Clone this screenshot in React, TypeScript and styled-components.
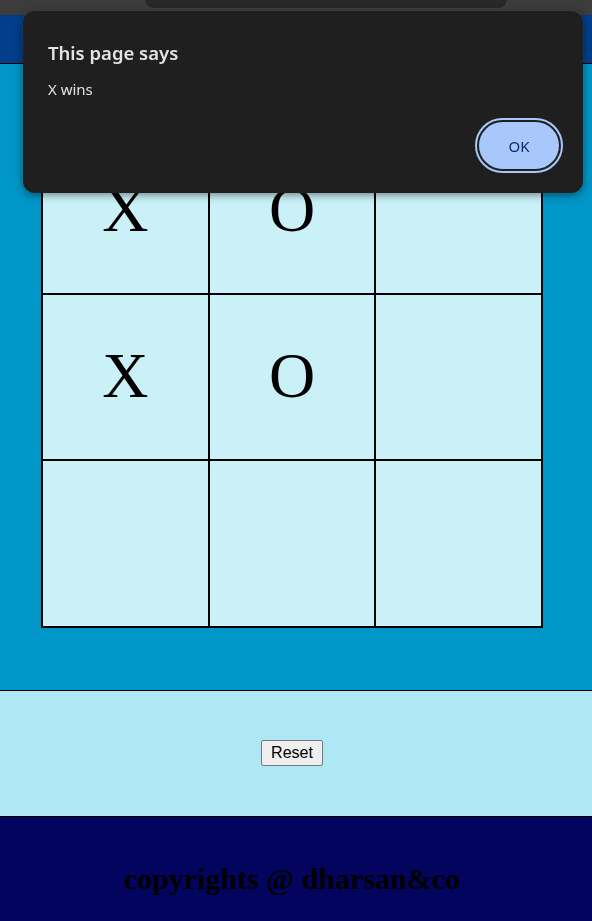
import React from "react";
import styled, { createGlobalStyle } from "styled-components";

const Global = createGlobalStyle`
  html, body { margin: 0; padding: 0; }
  body { font-family: "Liberation Serif", "Times New Roman", serif; background: #03045e; }
`;

const Header = styled.header`
  height: 63px;
  background: #023e8a;
  border-bottom: 1px solid #000;
`;

const Main = styled.main`
  background: #0096c7;
  padding: 62px 8px 62px 0;
  display: flex;
  justify-content: center;
`;

const Board = styled.div`
  width: 500px;
  border: 1px solid #000;
  display: grid;
  grid-template-columns: repeat(3, 1fr);
  grid-template-rows: repeat(3, 166.67px);
`;

const Cell = styled.div`
  border: 1px solid #000;
  background: #caf0f8;
  display: flex;
  align-items: center;
  justify-content: center;
  padding-bottom: 1px;
  box-sizing: border-box;
  font-family: "Liberation Serif", "Times New Roman", serif;
  font-size: 64px;
  color: #000;
`;

const Controls = styled.section`
  background: #ade8f4;
  border-top: 1px solid #000;
  height: 125px;
  padding-right: 8px;
  display: flex;
  align-items: center;
  justify-content: center;
`;

const ResetButton = styled.button`
  font-family: "Liberation Sans", Arial, sans-serif;
  font-size: 16px;
  color: #000;
  background: #efefef;
  border: 1px solid #767676;
  border-radius: 2px;
  padding: 3px 9px;
  line-height: 18px;
`;

const Footer = styled.footer`
  background: #03045e;
  border-top: 1px solid #000;
  padding: 24px 8px 40px 0;
  text-align: center;
`;

const FooterTitle = styled.h1`
  margin: 21.44px 0;
  font-size: 30px;
  font-weight: bold;
  color: #000;
  font-family: "Liberation Serif", "Times New Roman", serif;
`;

const ChromeBar = styled.div`
  position: fixed;
  top: 0;
  left: 0;
  right: 0;
  height: 15px;
  background: #3c3c3c;
`;

const ChromePill = styled.div`
  position: absolute;
  top: -8px;
  left: 144px;
  width: 362px;
  height: 15px;
  background: #282828;
  border: 1px solid #444;
  border-radius: 0 0 9px 9px;
`;

const Dialog = styled.div`
  position: fixed;
  top: 11px;
  left: 23px;
  width: 560px;
  height: 182px;
  box-sizing: border-box;
  background: #1f1f1f;
  border-radius: 12px;
  box-shadow: 0 2px 8px rgba(0, 0, 0, 0.45), 0 0 0 1px rgba(255, 255, 255, 0.04);
  padding: 29px 20px 0 25px;
  font-family: "Noto Sans", "Open Sans", sans-serif;
  color: #e3e3e3;
  display: flex;
  flex-direction: column;
`;

const DialogTitle = styled.div`
  font-size: 18.5px;
  font-weight: 600;
  line-height: 26px;
`;

const DialogMessage = styled.div`
  font-size: 15px;
  line-height: 20px;
  margin-top: 13px;
`;

const DialogActions = styled.div`
  display: flex;
  justify-content: flex-end;
  margin-top: 23px;
  padding-right: 4px;
`;

const OkButton = styled.button`
  width: 80px;
  height: 47px;
  border-radius: 24px;
  border: none;
  background: #a8c7fa;
  color: #062e6f;
  font-family: "Noto Sans", "Open Sans", sans-serif;
  font-size: 15px;
  outline: 2px solid #a8c7fa;
  outline-offset: 2px;
`;

const board = ["X", "O", "", "X", "O", "", "", "", ""];

export default function App() {
  return (
    <>
      <Global />
      <Header />
      <Main>
        <Board>
          {board.map((v, i) => (
            <Cell key={i}>{v}</Cell>
          ))}
        </Board>
      </Main>
      <Controls>
        <ResetButton>Reset</ResetButton>
      </Controls>
      <Footer>
        <FooterTitle>copyrights @ dharsan&amp;co</FooterTitle>
      </Footer>
      <ChromeBar>
        <ChromePill />
      </ChromeBar>
      <Dialog>
        <DialogTitle>This page says</DialogTitle>
        <DialogMessage>X wins</DialogMessage>
        <DialogActions>
          <OkButton>OK</OkButton>
        </DialogActions>
      </Dialog>
    </>
  );
}
